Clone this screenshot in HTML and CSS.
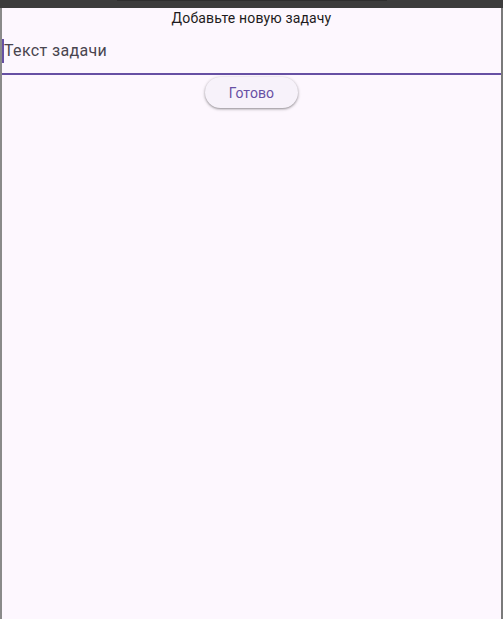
FILE: index.html
```html
<!DOCTYPE html>
<html lang="ru">
<head>
<meta charset="utf-8">
<title>Добавьте новую задачу</title>
<link rel="stylesheet" href="styles.css">
</head>
<body>
<div class="frame">
  <div class="topbar"><div class="topbar-strip"></div></div>
  <main class="page">
    <div class="title">Добавьте новую задачу</div>
    <div class="field"><span class="caret"></span><span class="placeholder">Текст задачи</span></div>
    <div class="actions"><button class="btn">Готово</button></div>
  </main>
</div>
</body>
</html>
```
FILE: styles.css
```css
* { box-sizing: border-box; }
html, body { margin: 0; height: 100%; }
body {
  font-family: Roboto, "Noto Sans", sans-serif;
  background: #fdf7fe;
  overflow: hidden;
}
.frame {
  height: 100vh;
  display: flex;
  flex-direction: column;
}
.topbar {
  height: 8px;
  background: #3c3c3c;
  display: flex;
  justify-content: center;
  flex: none;
}
.topbar-strip {
  width: 270px;
  height: 1px;
  background: #2e2e2e;
}
.page {
  flex: 1;
  border-left: 2px solid #8a8a8a;
  border-right: 2px solid #7a7a7a;
  background: #fdf7fe;
}
.title {
  text-align: center;
  font-size: 14px;
  line-height: 20px;
  color: #1d1b20;
  letter-spacing: 0.15px;
}
.field {
  display: flex;
  align-items: center;
  padding: 11px 0 10px 0;
  border-bottom: 2px solid #6750a4;
  font-size: 16px;
  line-height: 24px;
  color: #49454f;
  letter-spacing: 0.35px;
}
.caret {
  width: 2px;
  height: 24px;
  background: #6750a4;
  flex: none;
}
.actions {
  display: flex;
  justify-content: center;
  padding-top: 2px;
}
.btn {
  font-family: Roboto, "Noto Sans", sans-serif;
  font-size: 14px;
  font-weight: 400;
  letter-spacing: 0.1px;
  color: #6750a4;
  background: #f7f2fa;
  border: none;
  border-radius: 16px;
  height: 31px;
  width: 93px;
  padding: 0;
  box-shadow: 0 1px 2px rgba(0,0,0,0.3), 0 1px 3px 1px rgba(0,0,0,0.12);
}
```
